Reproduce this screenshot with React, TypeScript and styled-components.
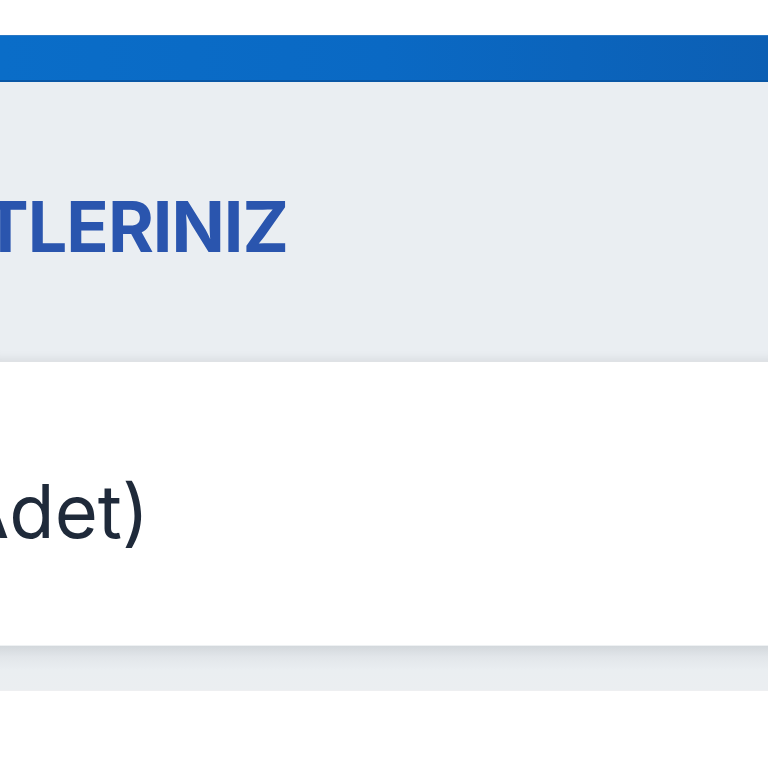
import React from "react";
import styled, { createGlobalStyle } from "styled-components";

const Global = createGlobalStyle`
  html, body { margin: 0; padding: 0; background: #ffffff; overflow: hidden; }
  body { font-family: Inter, "Noto Sans", sans-serif; }
`;

const Page = styled.div`
  display: flex;
  flex-direction: column;
  width: 768px;
  height: 768px;
  overflow: hidden;
`;

const TopGap = styled.div`
  height: 35px;
  background: #ffffff;
`;

const NavBar = styled.div`
  height: 47px;
  background: linear-gradient(90deg, #0a6dc8 0%, #0a69c4 50%, #0c5fb4 100%);
  border-top: 1px solid #2a78c4;
  border-bottom: 2px solid #0957a6;
  box-sizing: border-box;
`;

const Header = styled.header`
  height: 280px;
  background: #eaeef2;
  box-shadow: inset 0 -10px 10px -8px rgba(0, 0, 0, 0.08);
  border-bottom: 1px solid #dfe2e5;
  box-sizing: border-box;
  display: flex;
  align-items: center;
`;

const EdgeClip = styled.div<{ $end: number }>`
  width: ${(p) => p.$end}px;
  display: flex;
  justify-content: flex-end;
  white-space: nowrap;
`;

const Title = styled.h1`
  margin: 0;
  font-family: Inter, "Noto Sans", sans-serif;
  font-weight: 700;
  font-size: 70px;
  letter-spacing: -1px;
  color: #2a55ae;
  line-height: 1;
  padding-top: 10px;
`;

const Card = styled.section`
  height: 283px;
  background: #ffffff;
  display: flex;
  align-items: center;
`;

const Label = styled.span`
  font-family: Inter, "Noto Sans", sans-serif;
  font-weight: 400;
  font-size: 74px;
  color: #1f2a3a;
  line-height: 1;
  padding-top: 14px;
`;

const Band = styled.div`
  height: 46px;
  background: linear-gradient(180deg, #d3d8dc 0%, #e2e6ea 25%, #eaeef1 55%, #ebeef1 100%);
  border-top: 1px solid #eef1f3;
  border-bottom: 1px solid #eeeff1;
  box-sizing: border-box;
`;

export default function App() {
  return (
    <>
      <Global />
      <Page>
        <TopGap />
        <NavBar />
        <Header>
          <EdgeClip $end={288}>
            <Title>SEPETLERINIZ</Title>
          </EdgeClip>
        </Header>
        <Card>
          <EdgeClip $end={149}>
            <Label>Ürün Sayısı (Adet)</Label>
          </EdgeClip>
        </Card>
        <Band />
      </Page>
    </>
  );
}
